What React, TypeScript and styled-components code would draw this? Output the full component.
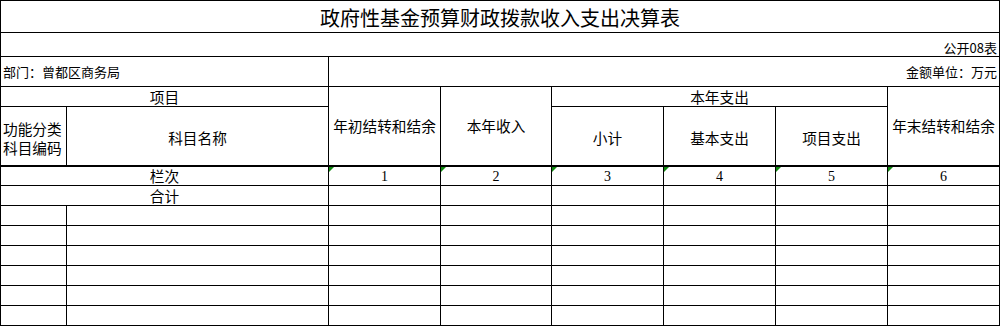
import React from "react";
import styled, { createGlobalStyle, css } from "styled-components";

const GlobalStyle = createGlobalStyle`
  html, body {
    margin: 0;
    padding: 0;
    background: #ffffff;
  }
  body {
    font-family: "Noto Sans CJK SC", "Liberation Sans", sans-serif;
    color: #000;
  }
`;

// widths include each column's right border line
const colWidths = [66, 262, 112, 111, 112, 112, 112, 112];

const spending = ["小计", "基本支出", "项目支出"];

const App = () => {
  const emptyRows = Array.from({ length: 6 }, (_, i) => i);
  return (
    <>
      <GlobalStyle />
      <Sheet>
        <colgroup>
          {colWidths.map((w, i) => (
            <col key={i} style={{ width: w }} />
          ))}
        </colgroup>
        <tbody>
          <Row $h={32}>
            <Title colSpan={8}>政府性基金预算财政拨款收入支出决算表</Title>
          </Row>
          <Row $h={24}>
            <Cell colSpan={8} $small $align="right" $valign="bottom">
              公开08表
            </Cell>
          </Row>
          <Row $h={30}>
            <Cell colSpan={2} $small $align="left">
              部门：曾都区商务局
            </Cell>
            <Cell colSpan={6} $small $align="right">
              金额单位：万元
            </Cell>
          </Row>
          <Row $h={20}>
            <Cell colSpan={2}>项目</Cell>
            <Cell rowSpan={2} $thick>
              年初结转和结余
            </Cell>
            <Cell rowSpan={2} $thick>
              本年收入
            </Cell>
            <Cell colSpan={3}>本年支出</Cell>
            <Cell rowSpan={2} $thick>
              年末结转和结余
            </Cell>
          </Row>
          <Row $h={60}>
            <Cell $align="left" $thick>
              <Stacked>
                <span>功能分类</span>
                <span>科目编码</span>
              </Stacked>
            </Cell>
            <Cell $thick $drop>
              科目名称
            </Cell>
            {spending.map((s) => (
              <Cell key={s} $thick $drop>
                {s}
              </Cell>
            ))}
          </Row>
          <Row $h={19}>
            <Cell colSpan={2}>栏次</Cell>
            {[1, 2, 3, 4, 5, 6].map((n) => (
              <NumCell key={n} $marker>
                {n}
              </NumCell>
            ))}
          </Row>
          <Row $h={20}>
            <Cell colSpan={2}>合计</Cell>
            {[1, 2, 3, 4, 5, 6].map((n) => (
              <Cell key={n} />
            ))}
          </Row>
          {emptyRows.map((r) => (
            <Row key={r} $h={20}>
              {colWidths.map((_, i) => (
                <Cell key={i} />
              ))}
            </Row>
          ))}
        </tbody>
      </Sheet>
    </>
  );
};

export default App;

const Sheet = styled.table`
  width: 1000px;
  table-layout: fixed;
  border-collapse: separate;
  border-spacing: 0;
  border-top: 1px solid #000;
  border-left: 1px solid #000;
`;

const Row = styled.tr<{ $h: number }>`
  height: ${(p) => p.$h}px;
`;

const Cell = styled.td<{
  $align?: "left" | "center" | "right";
  $valign?: "middle" | "bottom";
  $small?: boolean;
  $thick?: boolean;
  $drop?: boolean;
  $marker?: boolean;
}>`
  position: relative;
  box-sizing: border-box;
  border-right: 1px solid #000;
  border-bottom: 1px solid #000;
  padding: 0 2px;
  font-size: ${(p) => (p.$small ? "13px" : "14.67px")};
  line-height: 16px;
  white-space: nowrap;
  text-align: ${(p) => p.$align || "center"};
  vertical-align: ${(p) => p.$valign || "middle"};
  ${(p) =>
    p.$thick &&
    css`
      border-bottom-width: 2px;
    `}
  ${(p) =>
    p.$drop &&
    css`
      padding-top: 4px;
    `}
  ${(p) =>
    p.$marker &&
    css`
      &::before {
        content: "";
        position: absolute;
        left: 0;
        top: 0;
        width: 0;
        height: 0;
        border-top: 5px solid #108a10;
        border-right: 5px solid transparent;
      }
    `}
`;

const NumCell = styled(Cell)`
  font-family: "Liberation Serif", serif;
  font-size: 14px;
  padding-top: 1px;
`;

const Title = styled(Cell)`
  font-size: 20px;
  line-height: 24px;
  padding-top: 2px;
`;

const Stacked = styled.div`
  display: flex;
  flex-direction: column;
  line-height: 19px;
  padding-top: 4px;
`;
